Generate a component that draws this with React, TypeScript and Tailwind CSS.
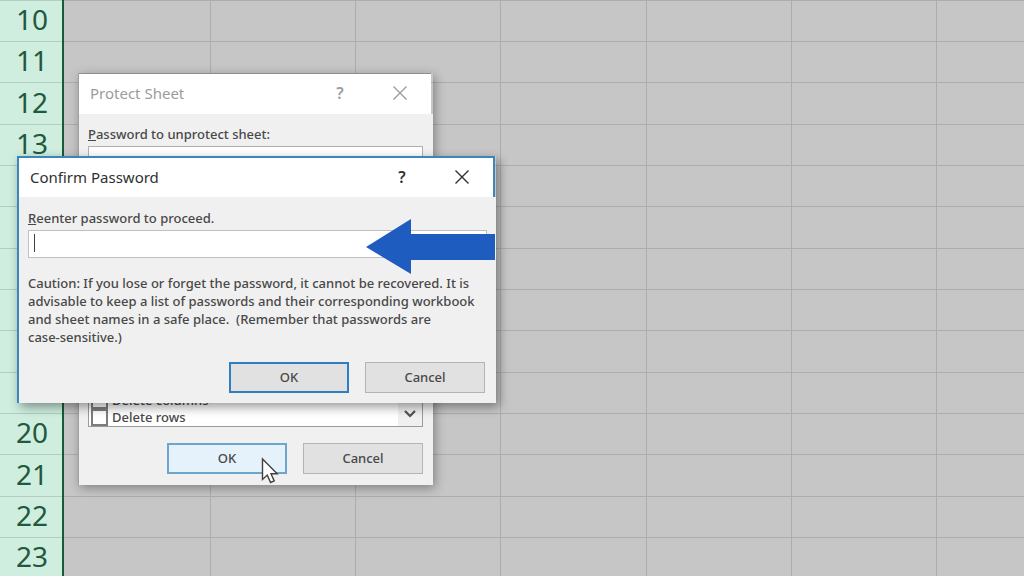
import type { ReactNode } from "react";
import clsx from "clsx";

const ROWS = [10, 11, 12, 13, 14, 15, 16, 17, 18, 19, 20, 21, 22, 23];

const COLUMNS = [
  { id: "A", width: "w-[147px]" },
  { id: "B", width: "w-[145px]" },
  { id: "C", width: "w-[145px]" },
  { id: "D", width: "w-[146px]" },
  { id: "E", width: "w-[145px]" },
  { id: "F", width: "w-[145px]" },
  { id: "G", width: "" },
];

function Sheet() {
  return (
    <table className="w-full table-fixed border-collapse bg-[#c6c6c6]">
      <colgroup>
        <col className="w-[63px]" />
        {COLUMNS.map((column) => (
          <col key={column.id} className={column.width} />
        ))}
      </colgroup>
      <tbody>
        {ROWS.map((row, i) => (
          <tr key={row} className={i % 3 === 2 ? "h-[42px]" : "h-[41px]"}>
            <th
              scope="row"
              className="border-t border-r-2 border-t-[#b0cfc0] border-r-[#175c38] bg-[#cfeee0] p-0 pr-3.5 pb-1 text-right text-[28px] leading-8 font-normal text-[#22593c]"
            >
              {row}
            </th>
            {COLUMNS.map((column) => (
              <td
                key={column.id}
                className="border-t border-r border-[#adadad] p-0 last:border-r-0"
              />
            ))}
          </tr>
        ))}
      </tbody>
    </table>
  );
}

function TitleBar({ title, active = false }: { title: string; active?: boolean }) {
  return (
    <header
      className={clsx(
        "flex h-[41px] items-center bg-white pr-[21px] pb-0.5 pl-[11px] font-normal",
        active
          ? "mr-px border-t-2 border-r-2 border-[#3d86bb] text-[#303030]"
          : "mr-0.5 border-t border-[#8f8f8f] text-[#9c9c9c]"
      )}
    >
      <h2 className="flex-1 text-[15px] leading-5">{title}</h2>
      <button type="button" aria-label="Help" className="w-5 text-center text-base font-semibold">
        ?
      </button>
      <button type="button" aria-label="Close" className="ml-10 flex w-5 justify-center">
        <svg className="size-4" viewBox="0 0 16 16" fill="none" stroke="currentColor" strokeWidth="1.4">
          <path d="M1.5 1.5l13 13M14.5 1.5l-13 13" />
        </svg>
      </button>
    </header>
  );
}

function DialogButton({
  variant = "plain",
  children,
}: {
  variant?: "plain" | "default" | "hover";
  children: ReactNode;
}) {
  return (
    <button
      type="button"
      className={clsx(
        "h-[31px] w-[120px]",
        variant === "plain" && "border border-[#b4b4b4] bg-[#e1e1e1]",
        variant === "default" && "border-2 border-[#2f7fc0] bg-[#e1e1e1]",
        variant === "hover" && "border-2 border-[#6ba6cd] bg-[#e5f1fb]"
      )}
    >
      {children}
    </button>
  );
}

function Permission({ label }: { label: string }) {
  return (
    <label className="flex h-[17px] items-center gap-1">
      <input
        type="checkbox"
        className="size-[17px] shrink-0 appearance-none border-2 border-[#7d7d7d] bg-white"
      />
      {label}
    </label>
  );
}

function ProtectSheetDialog() {
  return (
    <section
      role="dialog"
      aria-label="Protect Sheet"
      className="absolute top-[73px] left-[78px] flex h-[412px] w-[355px] flex-col border-l border-[#a0a0a0] text-[13px] font-medium text-[#484848] shadow-[2px_3px_10px_rgba(0,0,0,0.35)]"
    >
      <TitleBar title="Protect Sheet" />
      <div className="flex flex-1 flex-col bg-[#f0f0f0] pt-2.5 pr-2.5 pb-[11px] pl-[9px]">
        <label htmlFor="unprotect" className="leading-5">
          <u>P</u>assword to unprotect sheet:
        </label>
        <input id="unprotect" type="password" className="mt-0.5 h-7 border border-[#b0b0b0] bg-white px-1" />
        <div className="mt-4 flex flex-1 border border-[#9a9a9a] bg-white">
          <div className="flex flex-1 flex-col justify-end pl-0.5">
            <Permission label="Delete columns" />
            <Permission label="Delete rows" />
          </div>
          <button
            type="button"
            aria-label="Scroll down"
            className="flex w-6 items-end justify-center bg-[#f0f0f0] pb-1.5 text-[#505050]"
          >
            <svg className="size-3" viewBox="0 0 12 12" fill="none" stroke="currentColor" strokeWidth="2.2">
              <path d="M1 3l5 5 5-5" />
            </svg>
          </button>
        </div>
        <div className="mt-4 flex justify-end gap-4">
          <DialogButton variant="hover">OK</DialogButton>
          <DialogButton>Cancel</DialogButton>
        </div>
      </div>
      <svg className="absolute top-[384px] left-[182px] h-7 w-5" viewBox="0 0 20 28">
        <path
          d="M1.5 2v20.5l4.8-4.4 3.3 7.4 3.6-1.6-3.2-7.2h6.2z"
          fill="#fff"
          stroke="#404040"
          strokeWidth="1.4"
        />
      </svg>
    </section>
  );
}

function ConfirmPasswordDialog() {
  return (
    <section
      role="dialog"
      aria-label="Confirm Password"
      className="absolute top-[156px] left-[17px] flex w-[479px] flex-col border-l-2 border-[#3d86bb] text-[13px] font-medium text-[#484848] shadow-[3px_4px_10px_rgba(0,0,0,0.4)]"
    >
      <TitleBar title="Confirm Password" active />
      <div className="bg-[#f0f0f0] px-[9px] pt-[11px] pb-2.5">
        <label htmlFor="confirm" className="block leading-5">
          <u>R</u>eenter password to proceed.
        </label>
        <div className="relative mt-0.5">
          <input
            id="confirm"
            type="password"
            className="block h-7 w-full border border-[#c0c0c0] bg-white px-1 outline-none"
          />
          <span className="absolute top-1 left-1.5 h-[18px] w-px bg-[#404040]" />
        </div>
        <p className="mt-4 leading-[18px]">
          Caution: If you lose or forget the password, it cannot be recovered. It is
          <br />
          advisable to keep a list of passwords and their corresponding workbook
          <br />
          and sheet names in a safe place.&nbsp; (Remember that passwords are
          <br />
          case-sensitive.)
        </p>
        <div className="mt-4 mr-0.5 flex justify-end gap-4">
          <DialogButton variant="default">OK</DialogButton>
          <DialogButton>Cancel</DialogButton>
        </div>
      </div>
      <svg className="absolute top-[62px] left-[346px] h-14 w-[130px]" viewBox="0 0 130 56">
        <path d="M1 29L46 1v15h84v26H46v14z" fill="#1f5cc0" />
      </svg>
    </section>
  );
}

export default function App() {
  return (
    <main className="relative h-screen overflow-hidden bg-[#c6c6c6] font-['Noto_Sans','Open_Sans',sans-serif]">
      <Sheet />
      <ProtectSheetDialog />
      <ConfirmPasswordDialog />
    </main>
  );
}
